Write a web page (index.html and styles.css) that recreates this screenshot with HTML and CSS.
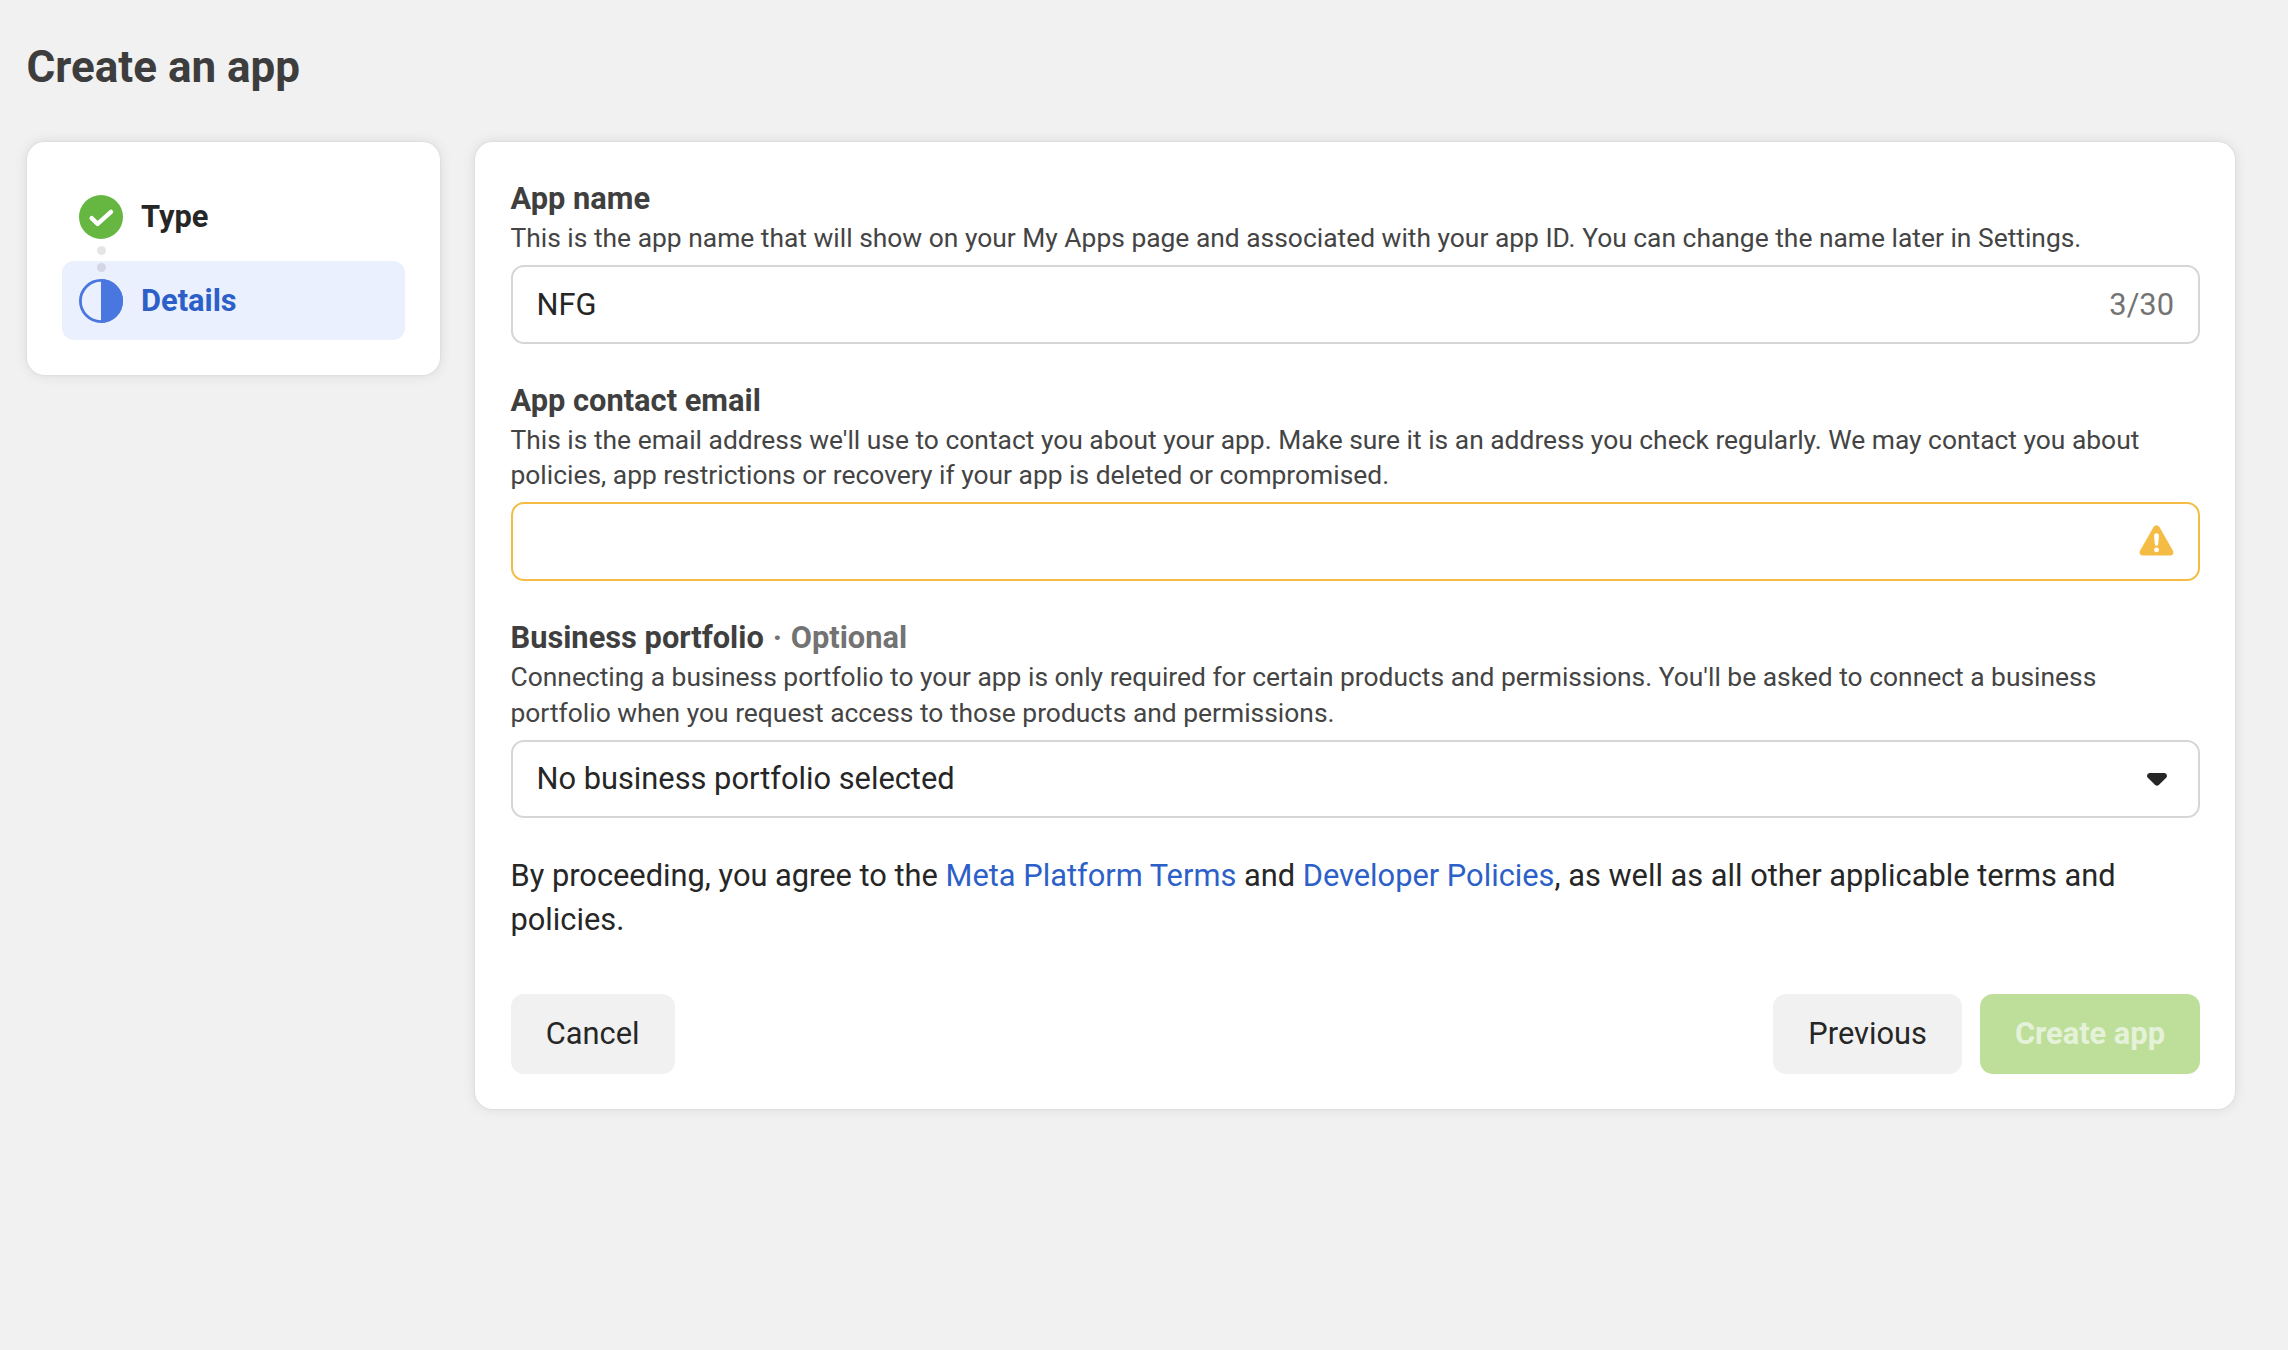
FILE: index.html
```
<!DOCTYPE html>
<html lang="en">
<head>
<meta charset="utf-8">
<title>Create an app</title>
<link rel="stylesheet" href="styles.css">
</head>
<body>
<h1 class="page-title">Create an app</h1>
<div class="layout">
  <nav class="card steps">
    <div class="step">
      <svg class="step-icon" viewBox="0 0 44 44"><circle cx="22" cy="22" r="22" fill="#65b742"/><path d="M12.6 23.2 L18.6 28.9 L32 16.9" fill="none" stroke="#fff" stroke-width="4.4" stroke-linecap="round" stroke-linejoin="round"/></svg>
      <span class="step-label">Type</span>
    </div>
    <div class="step step-current">
      <div class="dots"><i></i><i></i></div>
      <svg class="step-icon" viewBox="0 0 44 44"><circle cx="22" cy="22" r="20.6" fill="none" stroke="#4a76e0" stroke-width="2.8"/><path d="M22 0 A22 22 0 0 1 22 44 Z" fill="#4a76e0"/></svg>
      <span class="step-label">Details</span>
    </div>
  </nav>
  <main class="card form">
    <section class="group">
      <label class="label">App name</label>
      <p class="help">This is the app name that will show on your My Apps page and associated with your app ID. You can change the name later in Settings.</p>
      <div class="field"><span>NFG</span><span class="count">3/30</span></div>
    </section>
    <section class="group">
      <label class="label">App contact email</label>
      <p class="help help-email">This is the email address we'll use to contact you about your app. Make sure it is an address you check regularly. We may contact you about policies, app restrictions or recovery if your app is deleted or compromised.</p>
      <div class="field field-warning">
        <svg class="warning-icon" viewBox="0 0 36 32"><path d="M14.8 2.2 Q18 -1.8 21.2 2.2 L35 26.5 Q36.600 30.700 33 31.500 H3 Q-0.600 30.700 1 26.500 Z" fill="#f5bc45"/><path d="M18 8.600 C19.700 8.600 20.600 9.600 20.500 11.300 L19.800 19.600 Q19.500 21.500 18 21.500 Q16.500 21.500 16.200 19.600 L15.500 11.300 C15.400 9.600 16.300 8.600 18 8.600 Z" fill="#fff"/><circle cx="18" cy="25.700" r="2.500" fill="#fff"/></svg>
      </div>
    </section>
    <section class="group">
      <label class="label">Business portfolio<span class="optional"><span class="separator">·</span>Optional</span></label>
      <p class="help">Connecting a business portfolio to your app is only required for certain products and permissions. You'll be asked to connect a business portfolio when you request access to those products and permissions.</p>
      <div class="field field-select"><span>No business portfolio selected</span>
        <svg class="caret" viewBox="0 0 20 13"><path d="M2.300 0 H17.700 Q20 0.500 20 3 Q19.900 4 19.200 4.700 L11.800 12.100 Q10 13.600 8.200 12.100 L0.800 4.700 Q0.100 4 0 3 Q0 0.500 2.300 0 Z" fill="#262626"/></svg>
      </div>
    </section>
    <p class="terms">By proceeding, you agree to the <a>Meta Platform Terms</a> and <a>Developer Policies</a>, as well as all other applicable terms and policies.</p>
    <footer class="actions">
      <button class="button cancel">Cancel</button>
      <button class="button">Previous</button>
      <button class="button primary">Create app</button>
    </footer>
  </main>
</div>
</body>
</html>
```
FILE: styles.css
```
* { box-sizing: border-box; }
body {
  margin: 0;
  min-height: 1350px;
  background: #f1f1f1;
  color: #262626;
  font-family: Roboto, sans-serif;
  font-size: 30.8px;
  line-height: 44px;
}
h1, p { margin: 0; }
.page-title {
  padding: 41px 26.5px 49px;
  font-size: 44px;
  line-height: 52px;
  font-weight: 700;
  color: #3d3d3d;
}
.layout { display: flex; align-items: flex-start; gap: 35px; padding: 0 53px 0 27px; }
.card {
  background: #fff;
  border-radius: 17.6px;
  box-shadow: 0 0 13px rgba(0, 0, 0, .1), 0 0 2px rgba(0, 0, 0, .1);
}
.steps { width: 413px; flex: none; padding: 35px; display: flex; flex-direction: column; gap: 5px; }
.step { position: relative; display: flex; align-items: center; gap: 18px; height: 79px; padding-left: 17px; border-radius: 12px; }
.step-current { background: #eaf0fd; color: #2d5fc8; }
.step-icon { width: 44px; height: 44px; }
.step-label { font-weight: 700; }
.dots { position: absolute; left: 35px; top: -15px; display: grid; gap: 8px; }
.dots i { width: 9px; height: 9px; border-radius: 50%; background: rgba(0, 0, 0, .1); }
.form { flex: 1; height: 967px; padding: 35.4px 35px 35px 35.5px; display: flex; flex-direction: column; }
.group { margin-bottom: 35.1px; }
.label { display: block; font-weight: 700; color: #3f3f3f; }
.optional { color: #737373; }
.separator { margin: 0 8.6px 0 9px; }
.help { font-size: 26.4px; line-height: 35.7px; color: #444; }
.help-email { line-height: 35.2px; padding-bottom: 1px; }
.field {
  display: flex; justify-content: space-between; align-items: center;
  height: 79px; margin-top: 7.8px; padding: 1px 24px 0;
  border: 2px solid #d6d6d6; border-radius: 13px;
}
.count { color: #737373; }
.field-warning { justify-content: flex-end; border-color: #f5bc45; }
.field-select { height: 78px; margin-top: 8.1px; }
.warning-icon { width: 35px; height: 31px; margin-bottom: 3px; }
.caret { width: 20px; height: 13px; margin-right: 7px; }
.terms { margin-top: 1px; }
a { color: #2d5fc8; }
.actions { display: flex; gap: 18px; margin-top: auto; }
.button { height: 80px; padding: 0 35px; border: 0; border-radius: 13px; background: #f1f1f1; color: #262626; font: inherit; }
.cancel { margin-right: auto; padding: 0 35.3px; }
.primary { background: #bddf9a; color: #e5f2d9; font-weight: 700; }
```
